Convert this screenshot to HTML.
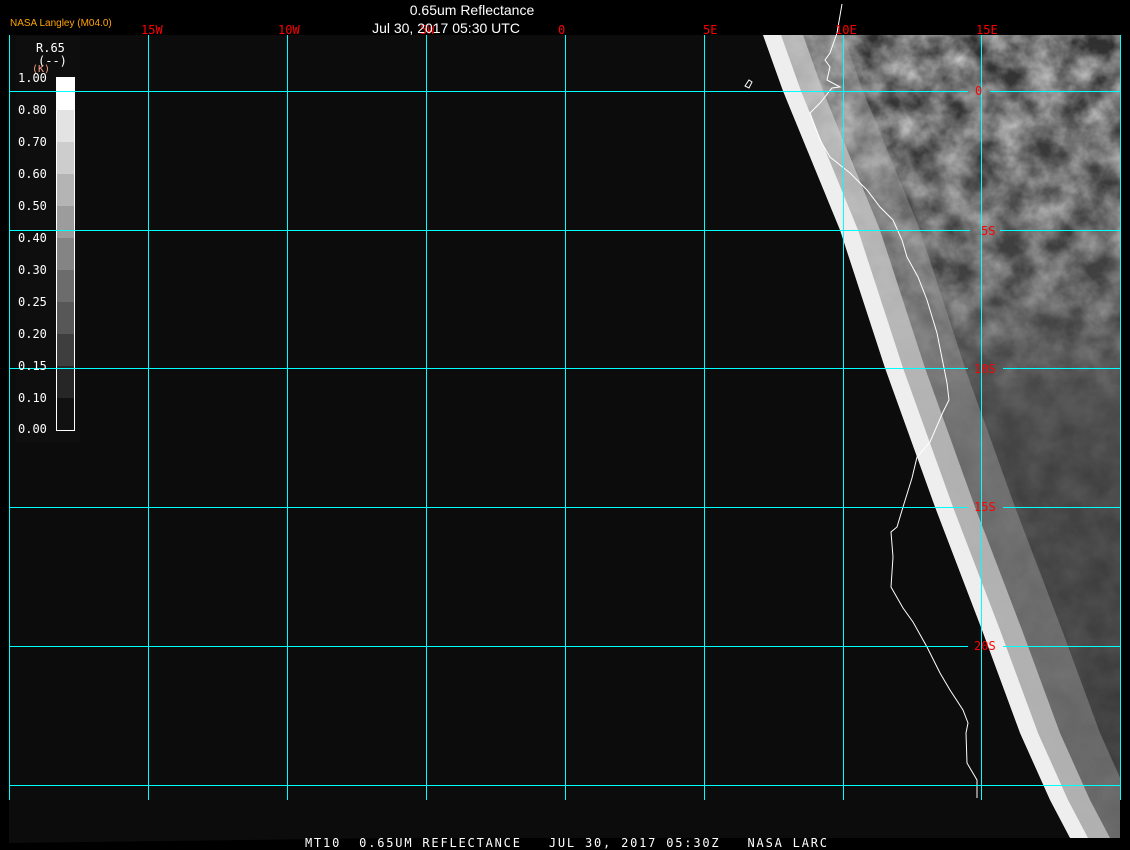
<!DOCTYPE html>
<html><head><meta charset="utf-8"><style>
html,body{margin:0;padding:0;background:#000;width:1130px;height:850px;overflow:hidden}
svg{display:block}
.lab{font-family:"DejaVu Sans Mono","Liberation Mono",monospace;font-size:12px;fill:#f00}
.cb{font-family:"DejaVu Sans Mono","Liberation Mono",monospace;font-size:12px;fill:#fff}
</style></head><body>
<svg width="1130" height="850" viewBox="0 0 1130 850" xmlns="http://www.w3.org/2000/svg">
<defs>
<linearGradient id="base" x1="0" y1="0" x2="0" y2="1">
<stop offset="0" stop-color="#787878"/>
<stop offset="0.3" stop-color="#666"/>
<stop offset="0.5" stop-color="#484848"/>
<stop offset="1" stop-color="#3c3c3c"/>
</linearGradient>
<filter id="tex" x="0" y="0" width="100%" height="100%" color-interpolation-filters="sRGB">
<feTurbulence type="fractalNoise" baseFrequency="0.035" numOctaves="4" seed="7"/>
<feColorMatrix type="matrix" values="1.6 0 0 0 -0.35  1.6 0 0 0 -0.35  1.6 0 0 0 -0.35  0 0 0 0 0.6"/>
</filter>
<clipPath id="sat"><polygon points="763,35 1120,35 1120,838 1070,838 1050,800 1020,733 982,630 935,507 885,368 840,230 783,91"/></clipPath>
<linearGradient id="fade" x1="0" y1="0" x2="0" y2="1">
<stop offset="0" stop-color="#fff"/>
<stop offset="0.3" stop-color="#fff" stop-opacity="0.6"/>
<stop offset="0.45" stop-color="#fff" stop-opacity="0.15"/>
<stop offset="1" stop-color="#fff" stop-opacity="0.1"/>
</linearGradient>
<mask id="m"><rect x="0" y="35" width="1130" height="810" fill="url(#fade)"/></mask>
</defs>
<rect x="0" y="0" width="1130" height="850" fill="#000"/>
<polygon points="9,35 1120,35 1120,838 400,838 9,843" fill="#0c0c0c"/>
<g clip-path="url(#sat)">
<rect x="740" y="35" width="390" height="810" fill="url(#base)"/>
<rect x="740" y="35" width="390" height="810" filter="url(#tex)" mask="url(#m)"/>
<polygon points="763,35 783,91 840,230 885,368 935,507 982,630 1020,733 1050,800 1070,838 1150,838 1130,800 1100,733 1062,630 1015,507 965,368 920,230 863,91 843,35" fill="#a8a8a8" opacity="0.4"/>
<polygon points="763,35 783,91 840,230 885,368 935,507 982,630 1020,733 1050,800 1070,838 1110,838 1090,800 1060,733 1022,630 975,507 925,368 880,230 823,91 803,35" fill="#c8c8c8" opacity="0.75"/>
<polygon points="763,35 783,91 840,230 885,368 935,507 982,630 1020,733 1050,800 1070,838 1088,838 1068,800 1038,733 1000,630 953,507 903,368 858,230 801,91 781,35" fill="#eeeeee"/>
</g>
<rect x="1121" y="35" width="9" height="815" fill="#000"/>
<rect x="16" y="36" width="64" height="407" fill="#0e0e0e"/>
<polyline fill="none" stroke="#fff" stroke-width="1" points="842,4 837,33 830,53 825,60 830,67 827,80 840,87 832,88 820,103 810,113 820,140 830,157 850,173 867,190 880,207 893,220 902,240 907,257 918,277 927,300 937,333 947,383 949,400 943,412 930,442 917,457 912,478 903,507 897,527 891,532 893,557 891,587 903,608 913,622 927,647 940,673 950,690 963,710 968,723 966,733 967,763 977,780 977,798"/>
<polygon points="745,86 749,80 752,82 749,88" fill="none" stroke="#fff" stroke-width="1"/>
<g stroke="#00ffff" stroke-width="1">
<line x1="9.5" y1="35" x2="9.5" y2="800"/>
<line x1="148.5" y1="35" x2="148.5" y2="800"/>
<line x1="287.5" y1="35" x2="287.5" y2="800"/>
<line x1="426.5" y1="35" x2="426.5" y2="800"/>
<line x1="565.5" y1="35" x2="565.5" y2="800"/>
<line x1="704.5" y1="35" x2="704.5" y2="800"/>
<line x1="843.5" y1="35" x2="843.5" y2="800"/>
<line x1="981.5" y1="35" x2="981.5" y2="800"/>
<line x1="1120.5" y1="35" x2="1120.5" y2="800"/>
<line x1="9" y1="91.5" x2="968" y2="91.5"/><line x1="990" y1="91.5" x2="1120" y2="91.5"/>
<line x1="9" y1="230.5" x2="970" y2="230.5"/><line x1="1000" y1="230.5" x2="1120" y2="230.5"/>
<line x1="9" y1="368.5" x2="968" y2="368.5"/><line x1="1003" y1="368.5" x2="1120" y2="368.5"/>
<line x1="9" y1="507.5" x2="968" y2="507.5"/><line x1="1003" y1="507.5" x2="1120" y2="507.5"/>
<line x1="9" y1="646.5" x2="968" y2="646.5"/><line x1="1003" y1="646.5" x2="1120" y2="646.5"/>
<line x1="9" y1="785.5" x2="1120" y2="785.5"/>
</g>
<g class="lab">
<text x="141" y="34">15W</text>
<text x="278" y="34">10W</text>
<text x="420" y="34">5W</text>
<text x="558" y="34">0</text>
<text x="703" y="34">5E</text>
<text x="835" y="34">10E</text>
<text x="976" y="34">15E</text>
<text x="975" y="95">0</text>
<text x="981" y="235">5S</text>
<text x="974" y="373">10S</text>
<text x="974" y="511">15S</text>
<text x="974" y="650">20S</text>
</g>
<text x="472" y="15" text-anchor="middle" font-family="Liberation Sans,sans-serif" font-size="14" fill="#fff">0.65um Reflectance</text>
<text x="446" y="33" text-anchor="middle" font-family="Liberation Sans,sans-serif" font-size="14" fill="#fff">Jul 30, 2017 05:30 UTC</text>
<text x="10" y="26" font-family="Liberation Sans,sans-serif" font-size="10" fill="#ffa500">NASA Langley (M04.0)</text>
<text class="cb" x="36" y="52">R.65</text>
<text class="cb" x="38" y="65" font-size="11">(--)</text>
<text x="32" y="72" font-family="DejaVu Sans Mono,monospace" font-size="10" fill="#f8a080">(K)</text>
<rect x="56" y="77" width="19" height="33" fill="#fff"/>
<rect x="56" y="110" width="19" height="32" fill="#e3e3e3"/>
<rect x="56" y="142" width="19" height="32" fill="#cdcdcd"/>
<rect x="56" y="174" width="19" height="32" fill="#b4b4b4"/>
<rect x="56" y="206" width="19" height="32" fill="#9c9c9c"/>
<rect x="56" y="238" width="19" height="32" fill="#848484"/>
<rect x="56" y="270" width="19" height="32" fill="#6c6c6c"/>
<rect x="56" y="302" width="19" height="32" fill="#575757"/>
<rect x="56" y="334" width="19" height="32" fill="#3e3e3e"/>
<rect x="56" y="366" width="19" height="32" fill="#262626"/>
<rect x="56" y="398" width="19" height="32" fill="#111"/>
<rect x="56.5" y="77.5" width="18" height="353" fill="none" stroke="#fff" stroke-width="1"/>
<g stroke="#00ffff" stroke-width="1">
<line x1="16" y1="91.5" x2="80" y2="91.5"/>
<line x1="16" y1="230.5" x2="80" y2="230.5"/>
<line x1="16" y1="368.5" x2="80" y2="368.5"/>
</g>
<g class="cb">
<text x="18" y="82">1.00</text>
<text x="18" y="114">0.80</text>
<text x="18" y="146">0.70</text>
<text x="18" y="178">0.60</text>
<text x="18" y="210">0.50</text>
<text x="18" y="242">0.40</text>
<text x="18" y="274">0.30</text>
<text x="18" y="306">0.25</text>
<text x="18" y="338">0.20</text>
<text x="18" y="370">0.15</text>
<text x="18" y="402">0.10</text>
<text x="18" y="433">0.00</text>
</g>
<text x="305" y="847" font-family="DejaVu Sans Mono,Liberation Mono,monospace" font-size="12" fill="#fff" xml:space="preserve" textLength="522">MT10  0.65UM REFLECTANCE   JUL 30, 2017 05:30Z   NASA LARC</text>
</svg>
</body></html>
